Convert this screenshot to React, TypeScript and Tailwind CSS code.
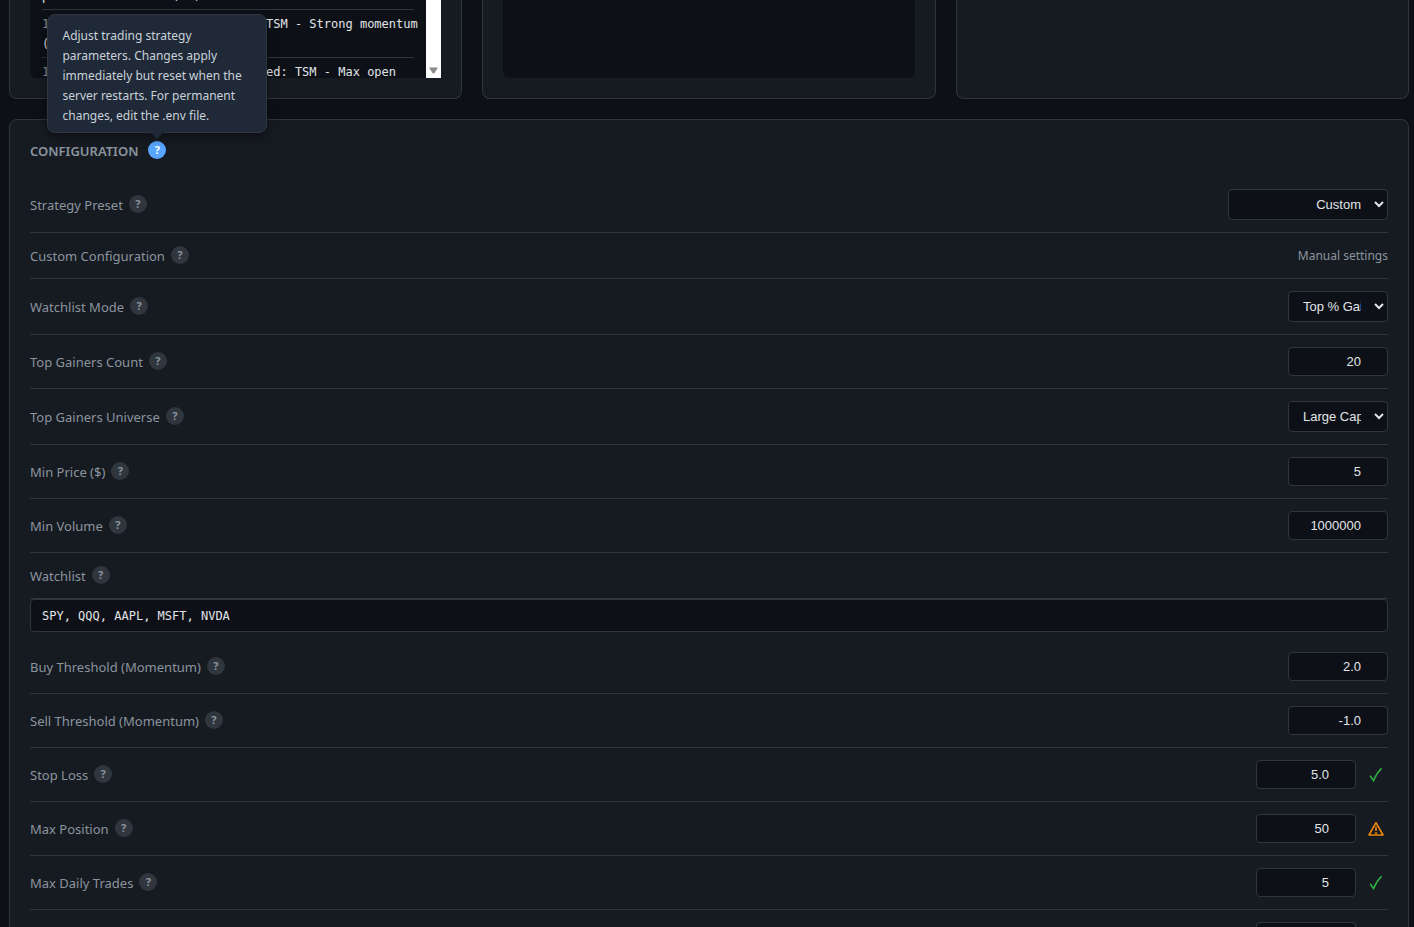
import type { ReactNode } from "react";

type Status = "ok" | "warn";

type Field = {
  id: string;
  label: string;
  value: string;
  kind: "number" | "select" | "wide-select" | "text";
  status?: Status;
};

const fields: Field[] = [
  { id: "preset", label: "Strategy Preset", value: "Custom", kind: "wide-select" },
  { id: "custom", label: "Custom Configuration", value: "Manual settings", kind: "text" },
  { id: "mode", label: "Watchlist Mode", value: "Top % Gainers", kind: "select" },
  { id: "count", label: "Top Gainers Count", value: "20", kind: "number" },
  { id: "universe", label: "Top Gainers Universe", value: "Large Cap", kind: "select" },
  { id: "min-price", label: "Min Price ($)", value: "5", kind: "number" },
  { id: "min-volume", label: "Min Volume", value: "1000000", kind: "number" },
];

const riskFields: Field[] = [
  { id: "buy", label: "Buy Threshold (Momentum)", value: "2.0", kind: "number" },
  { id: "sell", label: "Sell Threshold (Momentum)", value: "-1.0", kind: "number" },
  { id: "stop-loss", label: "Stop Loss", value: "5.0", kind: "number", status: "ok" },
  { id: "max-position", label: "Max Position", value: "50", kind: "number", status: "warn" },
  { id: "max-trades", label: "Max Daily Trades", value: "5", kind: "number", status: "ok" },
  { id: "max-open", label: "Max Open Positions", value: "10", kind: "number", status: "ok" },
];

const control =
  "rounded border border-[#30363d] bg-[#0d1117] text-right font-['Liberation_Sans',Arial,sans-serif] text-[13px] text-[#e1e4e8] outline-none";

function Help() {
  return (
    <button
      type="button"
      aria-label="Help"
      className="mt-px flex size-[18px] shrink-0 items-center justify-center rounded-full bg-[#30363d] text-[11px] font-bold text-[#8b949e]"
    >
      ?
    </button>
  );
}

function StatusIcon({ status }: { status: Status }) {
  return (
    <span className="flex w-6 justify-center">
      {status === "ok" ? (
        <svg width="14" height="16" viewBox="0 0 14 16" fill="none" stroke="#2fb344" strokeWidth="1.5">
          <path d="M1.2 8.8 L4.6 13.6 C6.2 9.2 9 4.6 12.6 1.2" />
        </svg>
      ) : (
        <svg width="16" height="16" viewBox="0 0 16 16" fill="none" stroke="#f0880e" strokeWidth="1.6">
          <path d="M8 1.6 L15 14 H1 Z" strokeLinejoin="round" />
          <path d="M8 5.5 V10 M8 11 V13" />
        </svg>
      )}
    </span>
  );
}

function Control({ field }: { field: Field }) {
  if (field.kind === "text") {
    return <output id={field.id} className="text-xs leading-[21px]">{field.value}</output>;
  }
  if (field.kind === "number") {
    return (
      <input
        id={field.id}
        type="number"
        defaultValue={field.value}
        className={`${control} h-[29px] w-[100px] px-[11px]`}
      />
    );
  }
  return (
    <select
      id={field.id}
      className={`${control} h-[31px] px-2.5 ${field.kind === "select" ? "w-[100px]" : "w-40"}`}
    >
      <option>{field.value}</option>
    </select>
  );
}

function Label({ id, children }: { id: string; children: ReactNode }) {
  return (
    <div className="flex h-[21px] items-start gap-1.5">
      <label htmlFor={id} className="leading-[23px]">{children}</label>
      <Help />
    </div>
  );
}

function Row({ field }: { field: Field }) {
  return (
    <div className="flex items-center justify-between border-b border-[#30363d] py-3">
      <Label id={field.id}>{field.label}</Label>
      <div className="flex items-center gap-2">
        <Control field={field} />
        {field.status && <StatusIcon status={field.status} />}
      </div>
    </div>
  );
}

function LogEntry({ time, children }: { time?: string; children: ReactNode }) {
  return (
    <div className="border-b border-[#30363d] pt-1 pb-[3px]">
      {time && <span className="text-[#8b949e]">{time} </span>}
      {children}
    </div>
  );
}

export default function App() {
  return (
    <div className="h-screen overflow-hidden bg-[#0d1117] pr-[5px] pl-[9px] font-['Noto_Sans','Segoe_UI',sans-serif] text-[13px] text-[#8b949e]">
      <div className="grid grid-cols-3 gap-5">
        <section className="rounded-b-lg border border-t-0 border-[#30363d] bg-[#161b22] px-5 pb-5">
          <div className="flex h-[78px] overflow-hidden rounded-bl-md bg-[#0d1117]">
            <div className="-mt-[18px] min-w-0 flex-1 px-3 font-['DejaVu_Sans_Mono',monospace] text-xs leading-5 whitespace-nowrap text-[#e1e4e8]">
              <LogEntry>positions reached (10)</LogEntry>
              <LogEntry time="10:30:16 AM">
                [INFO] BUY signal: TSM - Strong momentum
                <br />
                (2.41%)
              </LogEntry>
              <LogEntry time="10:30:16 AM">[RISK] Trade rejected: TSM - Max open</LogEntry>
            </div>
            <div className="flex w-[15px] flex-col items-center justify-end bg-white pb-1">
              <svg width="9" height="7" viewBox="0 0 9 7" fill="#8b8b8b">
                <path d="M0 0.5 H9 L5.5 6 Q4.5 7 3.5 6 Z" />
              </svg>
            </div>
          </div>
        </section>
        <section className="rounded-b-lg border border-t-0 border-[#30363d] bg-[#161b22] px-5 pb-5">
          <div className="h-[78px] rounded-b-md bg-[#0d1117]" />
        </section>
        <section className="rounded-b-lg border border-t-0 border-[#30363d] bg-[#161b22]" />
      </div>

      <section className="mt-5 rounded-lg border border-[#30363d] bg-[#161b22] p-5">
        <div className="mb-[15px] flex items-start gap-2.5">
          <h2 className="text-[13px] leading-[22px] font-semibold">CONFIGURATION</h2>
          <div className="relative mt-px">
            <button
              type="button"
              aria-label="Help"
              aria-describedby="config-tip"
              className="flex size-[18px] items-center justify-center rounded-full bg-[#58a6ff] text-[11px] font-bold text-white"
            >
              ?
            </button>
            <div
              id="config-tip"
              role="tooltip"
              className="absolute bottom-full left-1/2 mb-2 w-[220px] -translate-x-1/2 rounded-lg border border-[#30363d] bg-[#1f2937] px-3.5 pt-[11px] pb-1.5 text-[12px] leading-5 text-[#c9d1d9] shadow-[0_4px_12px_rgba(0,0,0,0.4)]"
            >
              Adjust trading strategy parameters. Changes apply immediately but reset when the server restarts. For
              permanent changes, edit the .env file.
              <span className="absolute top-full left-1/2 -translate-x-1/2 border-x-[7px] border-t-[7px] border-x-transparent border-t-[#1f2937]" />
            </div>
          </div>
        </div>

        {fields.map((field) => (
          <Row key={field.id} field={field} />
        ))}

        <div className="border-b border-[#30363d] py-3">
          <Label id="watchlist">Watchlist</Label>
        </div>
        <input
          id="watchlist"
          type="text"
          defaultValue="SPY, QQQ, AAPL, MSFT, NVDA"
          className="mb-2 block h-[33px] w-full rounded border border-[#30363d] bg-[#0d1117] px-[11px] font-['DejaVu_Sans_Mono',monospace] text-xs text-[#e1e4e8] outline-none"
        />

        {riskFields.map((field) => (
          <Row key={field.id} field={field} />
        ))}
      </section>
    </div>
  );
}
